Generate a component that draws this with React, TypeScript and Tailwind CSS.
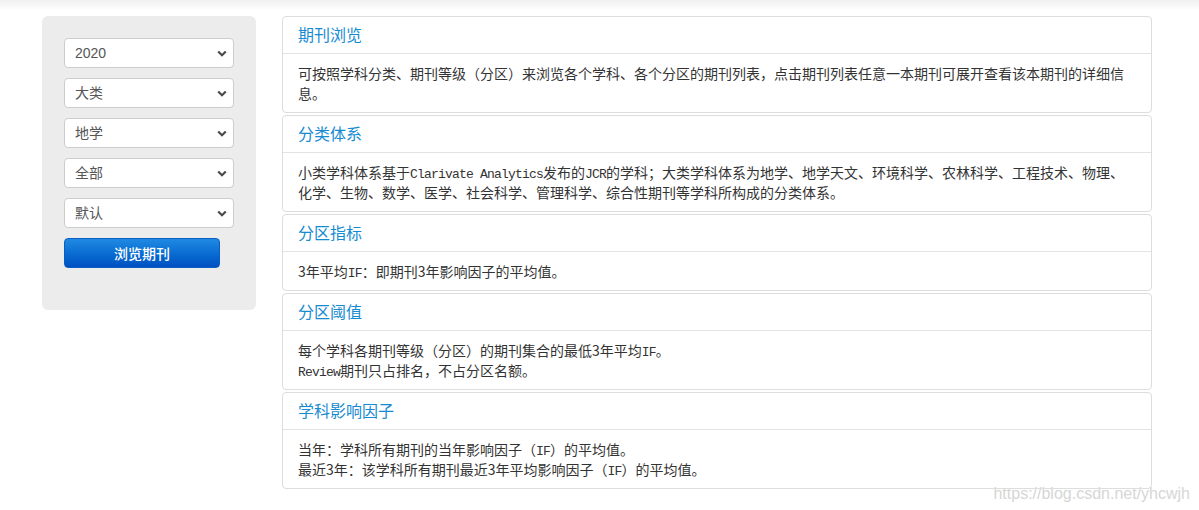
'use client';

const selects = [
  { value: '2020', options: ['2020', '2019', '2018'] },
  { value: '大类', options: ['大类', '小类'] },
  { value: '地学', options: ['地学', '物理', '化学'] },
  { value: '全部', options: ['全部', '1区', '2区', '3区', '4区'] },
  { value: '默认', options: ['默认', '影响因子'] },
];

const panels: { title: string; lines: string[] }[] = [
  {
    title: '期刊浏览',
    lines: [
      '可按照学科分类、期刊等级（分区）来浏览各个学科、各个分区的期刊列表，点击期刊列表任意一本期刊可展开查看该本期刊的详细信',
      '息。',
    ],
  },
  {
    title: '分类体系',
    lines: [
      '小类学科体系基于Clarivate Analytics发布的JCR的学科；大类学科体系为地学、地学天文、环境科学、农林科学、工程技术、物理、',
      '化学、生物、数学、医学、社会科学、管理科学、综合性期刊等学科所构成的分类体系。',
    ],
  },
  {
    title: '分区指标',
    lines: ['3年平均IF：即期刊3年影响因子的平均值。'],
  },
  {
    title: '分区阈值',
    lines: ['每个学科各期刊等级（分区）的期刊集合的最低3年平均IF。', 'Review期刊只占排名，不占分区名额。'],
  },
  {
    title: '学科影响因子',
    lines: ['当年：学科所有期刊的当年影响因子（IF）的平均值。', '最近3年：该学科所有期刊最近3年平均影响因子（IF）的平均值。'],
  },
];

// latin words are rendered half-width, like the original's SimSun
function Line({ text }: { text: string }) {
  const parts = text.split(/([A-Za-z][A-Za-z ]*[A-Za-z]|[A-Za-z])/);
  return (
    <div className="h-[20px] whitespace-nowrap">
      {parts.map((p, i) =>
        /^[A-Za-z]/.test(p) ? (
          <span
            key={i}
            className="font-['Liberation_Mono',monospace] text-[13px] tracking-[-0.8px] leading-none whitespace-pre"
          >
            {p}
          </span>
        ) : (
          <span key={i}>{p}</span>
        )
      )}
    </div>
  );
}

function Chevron() {
  return (
    <svg width="10" height="7" viewBox="0 0 10 7" className="pointer-events-none absolute right-[7px] top-[12px]">
      <path d="M1.2 1.5 L5 5.2 L8.8 1.5" fill="none" stroke="#4a4a4a" strokeWidth="2.2" />
    </svg>
  );
}

export default function App() {
  return (
    <div className="relative w-[1199px] h-[510px] overflow-hidden bg-white font-['Liberation_Sans','Noto_Sans_CJK_SC',sans-serif]">
      {/* top shadow */}
      <div className="h-[10px] bg-gradient-to-b from-[#f0f0f0] to-white" />

      <div className="flex items-start gap-[26px] pl-[42px] pt-[6px]">
        {/* Sidebar */}
        <div className="w-[214px] h-[294px] shrink-0 rounded-[6px] bg-[#ececec] px-[22px] pt-[22px]">
          <div className="flex flex-col gap-[10px]">
            {selects.map((s) => (
              <div key={s.value} className="relative w-[170px] h-[30px]">
                <select
                  defaultValue={s.value}
                  className="appearance-none w-full h-full rounded-[4px] border border-[#cccccc] bg-white pl-[10px] text-[14px] text-[#555555] outline-none font-['Liberation_Sans','Noto_Sans_CJK_SC',sans-serif]"
                >
                  {s.options.map((o) => (
                    <option key={o}>{o}</option>
                  ))}
                </select>
                <Chevron />
              </div>
            ))}
            <button className="w-[156px] h-[30px] rounded-[4px] border border-[#0a5ec2] bg-gradient-to-b from-[#1f8ae2] to-[#0050c2] text-[14px] font-medium text-white font-['Noto_Sans_CJK_SC',sans-serif]">
              浏览期刊
            </button>
          </div>
        </div>

        {/* Panels */}
        <div className="w-[870px] flex flex-col gap-[2px]">
          {panels.map((p) => (
            <div key={p.title} className="rounded-[4px] border border-[#dddddd] bg-white">
              <div className="border-b border-[#e3e3e3] px-[15px] pt-[8px] pb-[10px] text-[16px] leading-[18px] text-[#168bd2] font-['Noto_Sans_CJK_SC',sans-serif]">
                {p.title}
              </div>
              <div className="px-[15px] pt-[9px] pb-[9px] text-[14px] leading-[20px] text-[#333333] font-['Noto_Sans_CJK_SC',sans-serif]">
                {p.lines.map((l, i) => (
                  <Line key={i} text={l} />
                ))}
              </div>
            </div>
          ))}
        </div>
      </div>

      {/* watermark */}
      <div className="absolute right-[9px] bottom-[7px] text-[16px] leading-[18px] text-[#d6d6d6] font-['Liberation_Sans',sans-serif] [text-shadow:0_0_1px_#fff]">
        https://blog.csdn.net/yhcwjh
      </div>
    </div>
  );
}
